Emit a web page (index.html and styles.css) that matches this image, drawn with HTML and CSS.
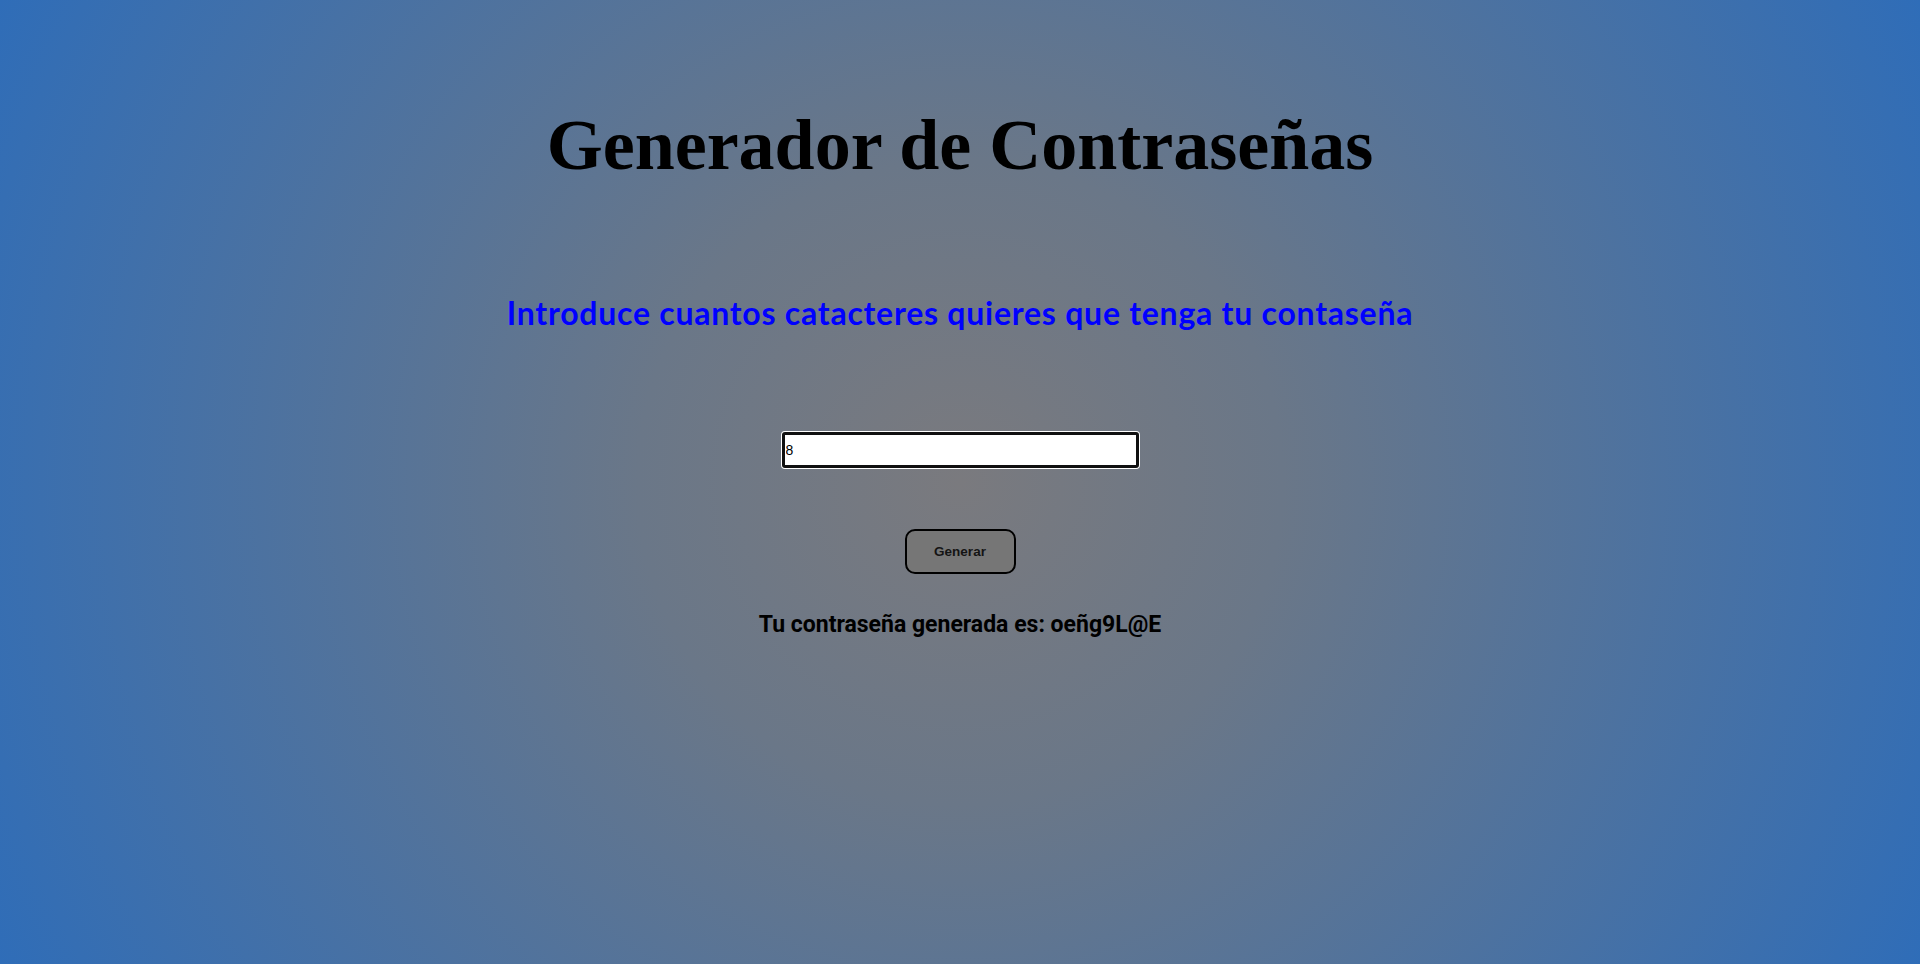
FILE: index.html
```html
<!DOCTYPE html>
<html lang="es">
<head>
<meta charset="utf-8">
<title>Generador de Contraseñas</title>
<link rel="stylesheet" href="styles.css">
</head>
<body>
<div class="page">
  <h1 class="title">Generador de Contraseñas</h1>
  <h2 class="subtitle">Introduce cuantos catacteres quieres que tenga tu contaseña</h2>
  <input class="length" type="text" value="8">
  <button class="generate" type="button">Generar</button>
  <p class="result">Tu contraseña generada es: oeñg9L@E</p>
</div>
</body>
</html>
```

FILE: styles.css
```css
html, body {
  margin: 0;
  padding: 0;
  background: #ffffff;
}

.page {
  height: 964px;
  display: flex;
  flex-direction: column;
  align-items: center;
  background: radial-gradient(circle at 50% 50%, #7a7a7e 0%, #6a7788 30%, #2f6db8 100%);
}

.title {
  margin: 104px 0 0;
  font-family: "Liberation Serif", "Times New Roman", serif;
  font-weight: 700;
  font-size: 72px;
  line-height: 83px;
  color: #000;
}

.subtitle {
  margin: 107px 0 0;
  font-family: Lato, "Noto Sans", sans-serif;
  font-weight: 700;
  font-size: 32px;
  line-height: 37px;
  letter-spacing: 0.75px;
  color: #0000ff;
}

.length {
  box-sizing: border-box;
  margin: 101px 0 0;
  width: 357px;
  height: 36px;
  padding: 0 1px;
  border: 3px solid #101010;
  border-radius: 3px;
  box-shadow: 0 0 0 1px #ffffff;
  background: #ffffff;
  font-family: "Liberation Sans", Arial, sans-serif;
  font-size: 14px;
  color: #000;
  outline: none;
}

.generate {
  box-sizing: border-box;
  margin: 61px 0 0;
  width: 111px;
  height: 45px;
  border: 2px solid #000;
  border-radius: 10px;
  background: #767676;
  font-family: "Liberation Sans", Arial, sans-serif;
  font-weight: 700;
  font-size: 13.5px;
  color: #141414;
  cursor: pointer;
}

.result {
  margin: 37px 0 0;
  font-family: Roboto, "Liberation Sans", sans-serif;
  font-weight: 700;
  font-size: 23px;
  line-height: 28px;
  color: #000;
}
```
